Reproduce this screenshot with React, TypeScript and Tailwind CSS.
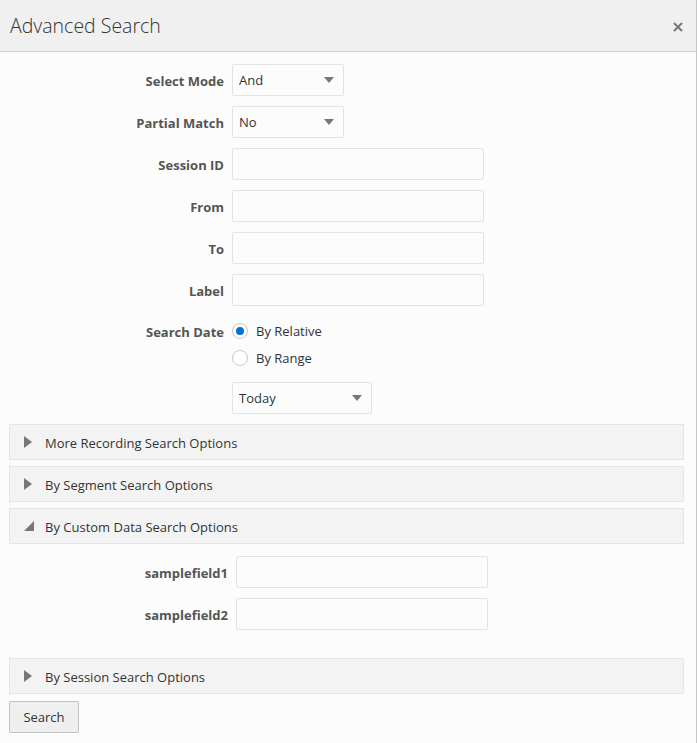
import React from "react";

const font = { fontFamily: '"Open Sans", "Noto Sans", sans-serif' };

function Caret() {
  return (
    <svg width="10" height="6" viewBox="0 0 10 6" className="shrink-0">
      <path d="M0 0 L10 0 L5 6 Z" fill="#777" />
    </svg>
  );
}

function Select({ value, width }: { value: string; width: string }) {
  return (
    <div className={`flex h-[32px] ${width} items-center justify-between rounded-[2px] border border-[#e3e3e3] bg-[#fcfcfc] pl-[6px] pr-[9px] text-[13px] text-[#333]`}>
      <span className="pt-[2px]">{value}</span>
      <Caret />
    </div>
  );
}

function Row({ label, children, labelW = "w-[225px]" }: { label: string; children: React.ReactNode; labelW?: string }) {
  return (
    <div className="flex items-center">
      <div className={`${labelW} shrink-0 pr-[1px] pt-[3px] text-right text-[13px] font-bold text-[#555]`}>{label}</div>
      <div className="ml-[7px]">{children}</div>
    </div>
  );
}

function Input({ w = "w-[252px]" }: { w?: string }) {
  return <div className={`h-[32px] ${w} rounded-[2px] border border-[#e3e3e3] bg-[#fcfcfc]`} />;
}

function Radio({ checked, label }: { checked?: boolean; label: string }) {
  return (
    <div className="flex h-[27px] items-center">
      <div className="flex h-[16px] w-[16px] items-center justify-center rounded-full border border-[#c8c8c8] bg-white">
        {checked && <div className="h-[8px] w-[8px] rounded-full bg-[#0572ce]" />}
      </div>
      <span className="ml-[8px] pt-[2px] text-[13px] text-[#333]">{label}</span>
    </div>
  );
}

function Accordion({ label, open }: { label: string; open?: boolean }) {
  return (
    <div className="flex h-[36px] items-center border border-[#e5e5e5] bg-[#f3f3f3]">
      <div className="ml-[14px] flex w-[21px] items-center">
        {open ? (
          <svg width="10" height="10" viewBox="0 0 10 10">
            <path d="M10 0 L10 10 L0 10 Z" fill="#777" />
          </svg>
        ) : (
          <svg width="8" height="12" viewBox="0 0 8 12">
            <path d="M0 0 L8 6 L0 12 Z" fill="#777" />
          </svg>
        )}
      </div>
      <span className="pt-[3px] text-[13px] text-[#333]">{label}</span>
    </div>
  );
}

export default function App() {
  return (
    <div style={font} className="h-[743px] w-[697px] overflow-hidden border-r border-[#c6c6c6] bg-[#fcfcfc]">
      <div className="flex h-[52px] items-center justify-between border-b border-[#cfcfcf] bg-[#f0f0f0] pl-[10px] pr-[13px]">
        <span className="pt-[1px] text-[19.5px] font-light text-[#333]">Advanced Search</span>
        <svg width="10" height="10" viewBox="0 0 10 10" className="mt-[2px]">
          <path d="M1 1 L9 9 M9 1 L1 9" stroke="#777" strokeWidth="2" />
        </svg>
      </div>
      <div className="flex flex-col pt-[12px]">
        <div className="flex flex-col gap-[10px]">
          <Row label="Select Mode"><Select value="And" width="w-[112px]" /></Row>
          <Row label="Partial Match"><Select value="No" width="w-[112px]" /></Row>
          <Row label="Session ID"><Input /></Row>
          <Row label="From"><Input /></Row>
          <Row label="To"><Input /></Row>
          <Row label="Label"><Input /></Row>
        </div>
        <div className="mt-[11px] flex items-start">
          <div className="w-[225px] pr-[1px] pt-[6px] text-right text-[13px] font-bold text-[#555]">Search Date</div>
          <div className="ml-[7px] flex flex-col">
            <Radio checked label="By Relative" />
            <Radio label="By Range" />
            <div className="mt-[11px]">
              <Select value="Today" width="w-[140px]" />
            </div>
          </div>
        </div>
        <div className="ml-[9px] mr-[12px] mt-[10px] flex flex-col gap-[6px]">
          <Accordion label="More Recording Search Options" />
          <Accordion label="By Segment Search Options" />
          <Accordion label="By Custom Data Search Options" open />
        </div>
        <div className="mt-[12px] flex flex-col gap-[10px]">
          <Row label="samplefield1" labelW="w-[229px]"><Input /></Row>
          <Row label="samplefield2" labelW="w-[229px]"><Input /></Row>
        </div>
        <div className="ml-[9px] mr-[12px] mt-[28px]">
          <Accordion label="By Session Search Options" />
        </div>
        <div className="ml-[9px] mt-[7px]">
          <button className="h-[32px] w-[70px] rounded-[2px] border border-[#c4c4c4] bg-[#efefef] pt-[2px] text-[13px] text-[#333]">Search</button>
        </div>
      </div>
    </div>
  );
}
